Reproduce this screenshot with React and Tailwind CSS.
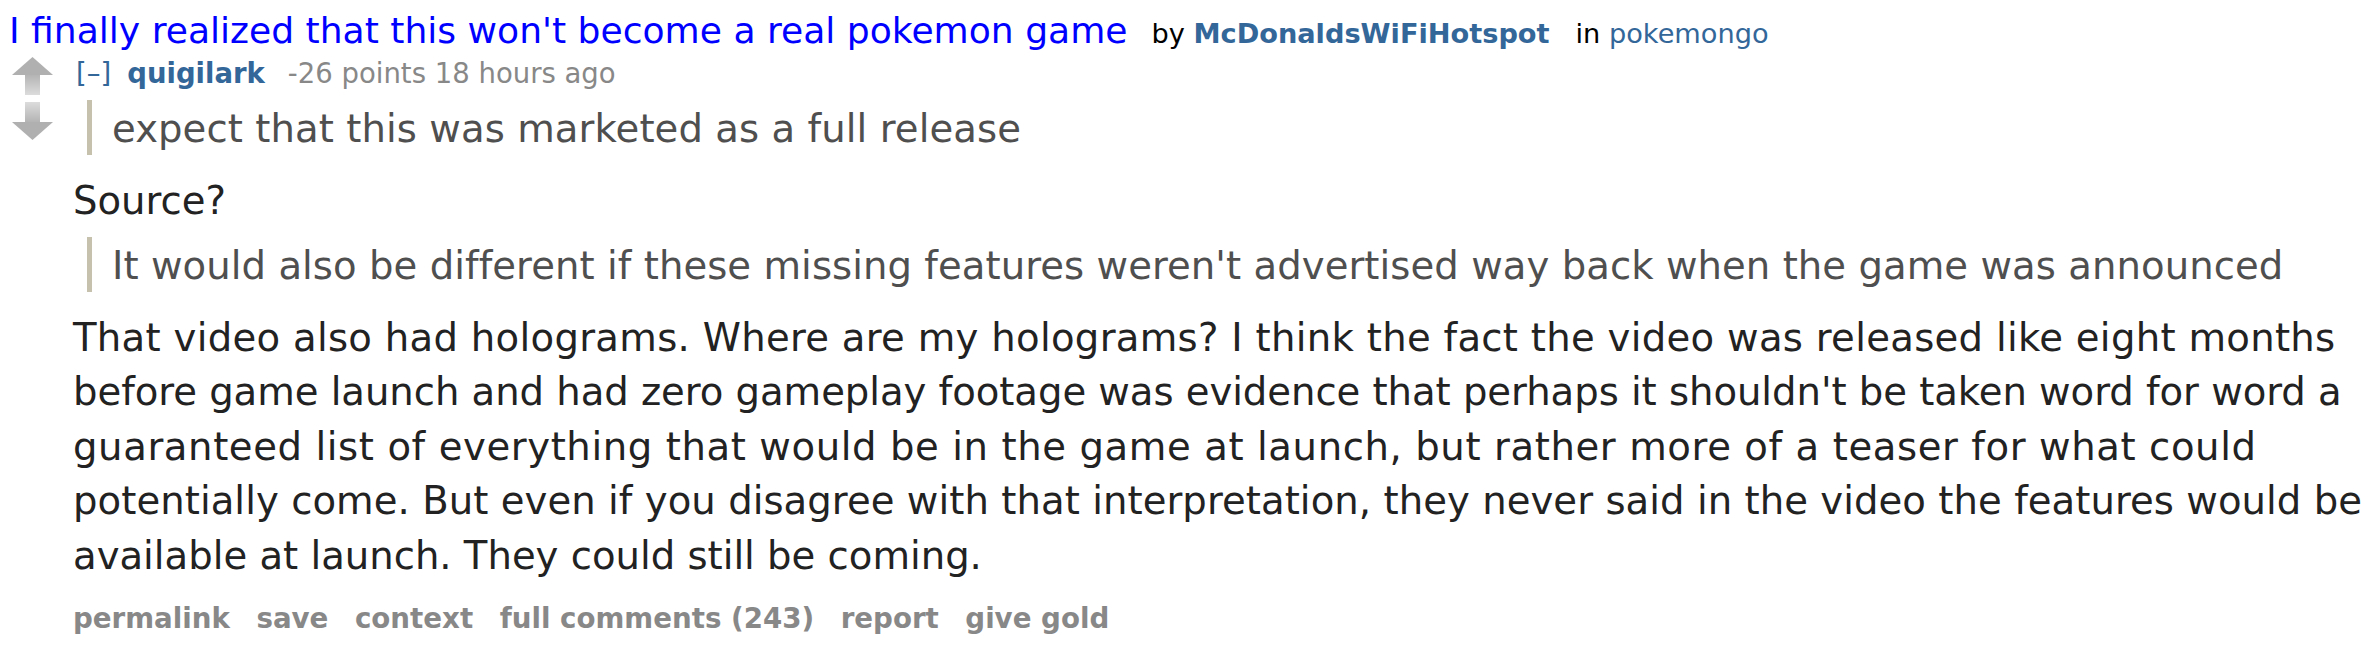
import { useId } from "react";

const ArrowUp = () => {
    const id = useId();
    return (
        <svg width="41" height="38" viewBox="0 0 41 38">
            <defs>
                <linearGradient id={id} x1="0" y1="0" x2="0" y2="1">
                    <stop offset="0" stopColor="#b0b0b0" />
                    <stop offset="1" stopColor="#dcdcdc" />
                </linearGradient>
            </defs>
            <rect x="13" y="16" width="15" height="22" fill={`url(#${id})`} />
            <polygon points="20.5,0 41,18 0,18" fill="#b0b0b0" />
        </svg>
    );
};

const ArrowDown = () => {
    const id = useId();
    return (
        <svg width="41" height="38" viewBox="0 0 41 38">
            <defs>
                <linearGradient id={id} x1="0" y1="0" x2="0" y2="1">
                    <stop offset="0" stopColor="#dcdcdc" />
                    <stop offset="1" stopColor="#b0b0b0" />
                </linearGradient>
            </defs>
            <rect x="13" y="0" width="15" height="22" fill={`url(#${id})`} />
            <polygon points="0,20 41,20 20.5,38" fill="#b0b0b0" />
        </svg>
    );
};

const buttons = ["permalink", "save", "context", "full comments (243)", "report", "give gold"];

// tracking per line evens out the width gap between Verdana and DejaVu
const paragraph = [
    ["That video also had holograms. Where are my holograms? I think the fact the video was released like eight months", "tracking-[0.3px]"],
    ["before game launch and had zero gameplay footage was evidence that perhaps it shouldn't be taken word for word a", "tracking-[-0.04px]"],
    ["guaranteed list of everything that would be in the game at launch, but rather more of a teaser for what could", "tracking-[0.6px]"],
    ["potentially come. But even if you disagree with that interpretation, they never said in the video the features would be", "tracking-[0.06px]"],
    ["available at launch. They could still be coming.", "tracking-normal"],
];

export default function App() {
    return (
        <div className="w-full h-[647px] bg-white pl-[12px] font-['DejaVu_Sans',Verdana,sans-serif] overflow-hidden">
            {/* parent link */}
            <p className="pt-[12px] -ml-[3px] text-[36.1px] leading-[38px] whitespace-nowrap">
                <a className="text-[#0000ff]">I finally realized that this won't become a real pokemon game</a>
                <span className="text-[27.2px] leading-none text-black ml-[24px]">by </span>
                <a className="text-[27.2px] leading-none font-bold text-[#336699]">McDonaldsWiFiHotspot</a>
                <span className="text-[27.2px] leading-none text-black ml-[26px]">in </span>
                <a className="text-[27.2px] leading-none text-[#336699]">pokemongo</a>
            </p>

            {/* comment */}
            <div className="flex mt-[7px]">
                <div className="flex flex-col gap-[7px] w-[41px] shrink-0">
                    <ArrowUp />
                    <ArrowDown />
                </div>
                <div className="ml-[20px] flex-1 min-w-0">
                    <p className="pl-[3px] text-[27.5px] leading-[32px] whitespace-nowrap">
                        <a className="text-[#336699]">[–]</a>
                        <a className="text-[#336699] font-bold ml-[16px]">quigilark</a>
                        <span className="text-[#888888] ml-[23px]">-26 points 18 hours ago</span>
                    </p>

                    <div className="text-[38.6px] leading-[54.5px] text-[#222222]">
                        <blockquote className="mt-[11px] ml-[14px] h-[54.5px] pt-[2px] border-l-[5px] border-[#c5c1ad] pl-[20px] text-[#4f4f4f] tracking-[0.08px] whitespace-nowrap">
                            expect that this was marketed as a full release
                        </blockquote>
                        <p className="mt-[19px]">Source?</p>
                        <blockquote className="mt-[9px] ml-[14px] h-[54.5px] pt-[2px] border-l-[5px] border-[#c5c1ad] pl-[20px] text-[#4f4f4f] tracking-[0.06px] whitespace-nowrap">
                            It would also be different if these missing features weren't advertised way back when the game was announced
                        </blockquote>
                        <p className="mt-[19px] whitespace-nowrap">
                            {paragraph.map(([line, tr], i) => (
                                <span key={i} className={`block ${tr}`}>{line}</span>
                            ))}
                        </p>
                    </div>

                    <ul className="flex gap-[26.5px] mt-[20px] text-[27.7px] leading-[32px] font-bold text-[#888888] whitespace-nowrap">
                        {buttons.map(b => (
                            <li key={b}><a>{b}</a></li>
                        ))}
                    </ul>
                </div>
            </div>
        </div>
    );
}
